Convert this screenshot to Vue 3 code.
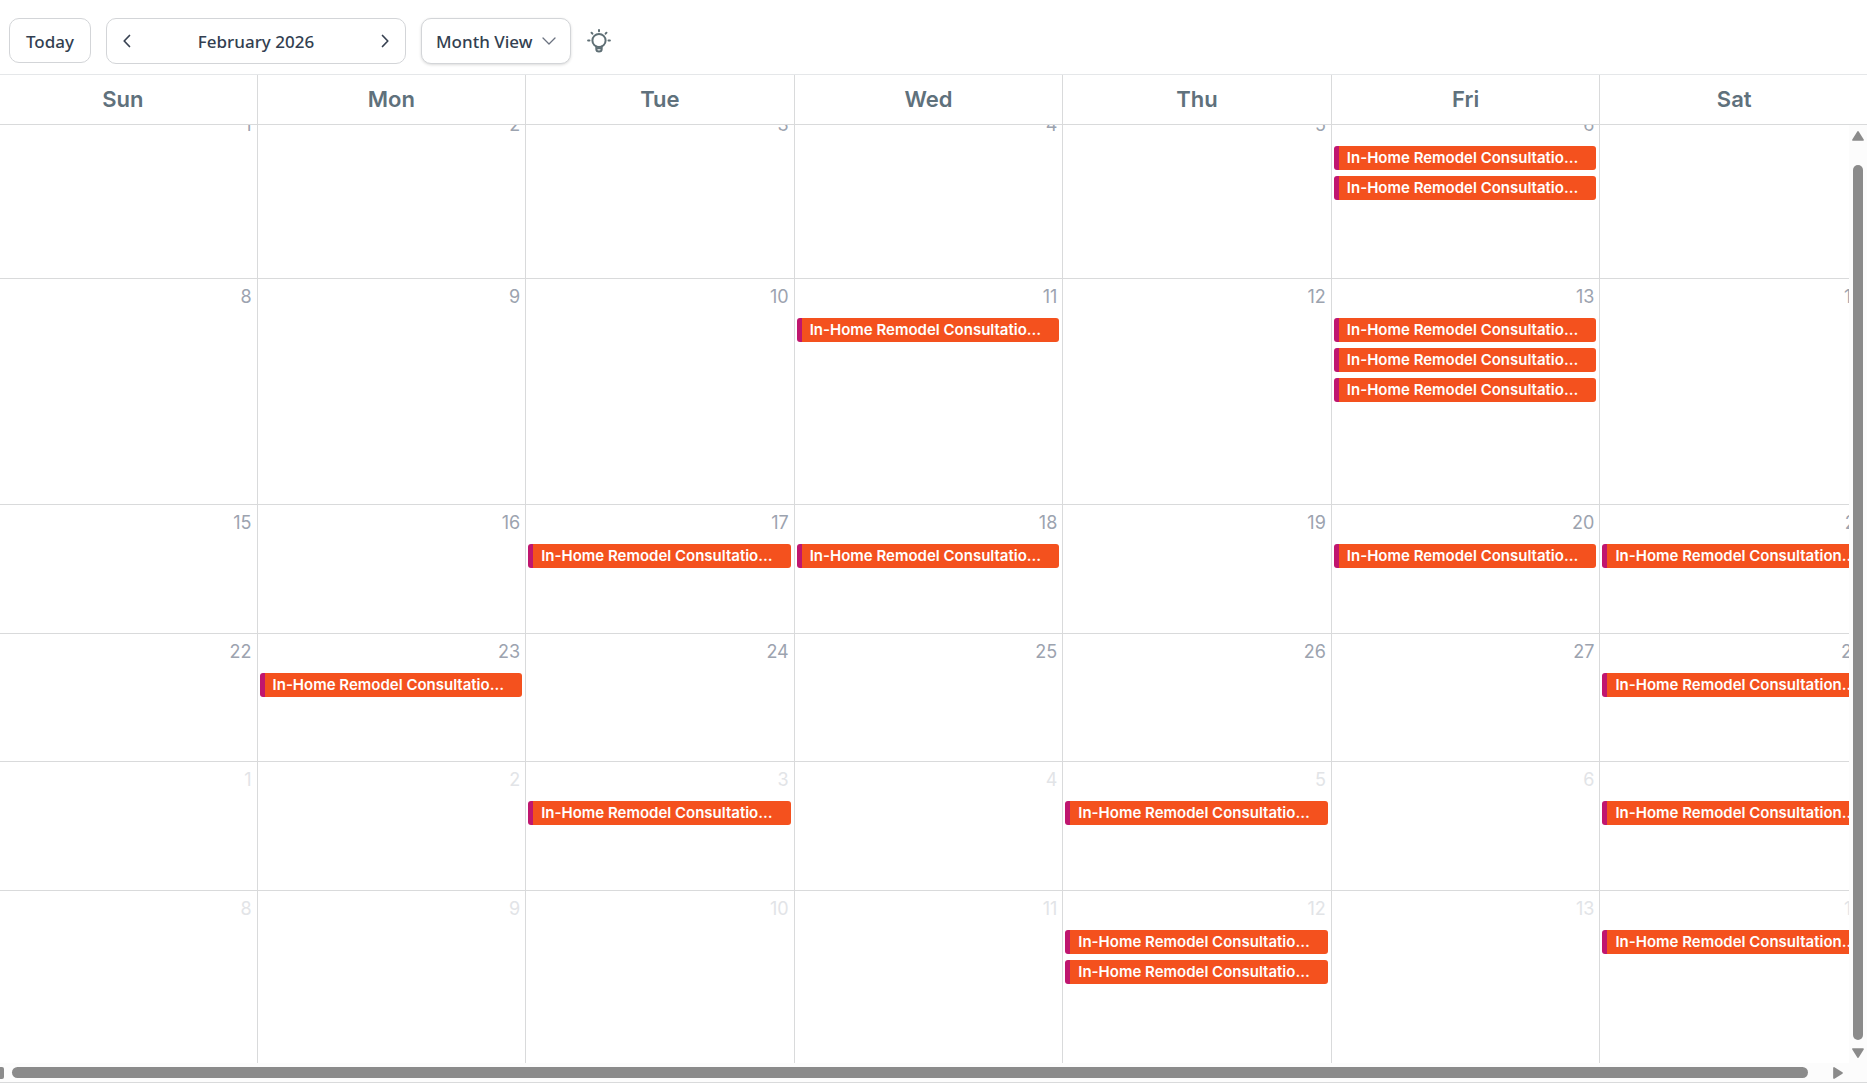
<script setup>
import { ref } from 'vue'

const view = ref('Month View')
const dayNames = ['Sun', 'Mon', 'Tue', 'Wed', 'Thu', 'Fri', 'Sat']
const title = 'In-Home Remodel Consultation Visit'

// Each week: first date, whether it belongs to the next month, and event counts per weekday
const weekData = [
  { start: 1, size: 'first', counts: [0, 0, 0, 0, 0, 2, 0] },
  { start: 8, size: 'tall', counts: [0, 0, 0, 1, 0, 3, 0] },
  { start: 15, size: 'short', counts: [0, 0, 1, 1, 0, 1, 1] },
  { start: 22, size: 'shorter', counts: [0, 1, 0, 0, 0, 0, 1] },
  { start: 1, size: 'short', next: true, counts: [0, 0, 1, 0, 1, 0, 1] },
  { start: 8, size: 'last', next: true, counts: [0, 0, 0, 0, 2, 0, 1] },
]
const weeks = weekData.map((w) => ({
  ...w,
  days: w.counts.map((count, i) => ({ date: w.start + i, count })),
}))
</script>

<template>
  <main class="calendar">
    <header class="toolbar">
      <button class="control today" type="button">Today</button>
      <div class="control period">
        <button class="arrow" type="button" aria-label="Previous month">
          <svg width="8" height="14" viewBox="0 0 8 14"><path d="M6.500 1.500 1.200 7l5.300 5.500" /></svg>
        </button>
        <span>February 2026</span>
        <button class="arrow" type="button" aria-label="Next month">
          <svg width="8" height="14" viewBox="0 0 8 14"><path d="M1.500 1.500 6.800 7l-5.300 5.500" /></svg>
        </button>
      </div>
      <div class="view">
        <select v-model="view" class="control" aria-label="Calendar view">
          <option>Month View</option>
          <option>Week View</option>
          <option>Day View</option>
        </select>
        <svg class="caret" width="14" height="8" viewBox="0 0 14 8"><path d="M1 1l6 6 6-6" /></svg>
      </div>
      <button class="hint" type="button" aria-label="Tips">
        <svg width="24" height="24" viewBox="0 0 24 24">
          <circle cx="12" cy="11.500" r="6.600" />
          <path d="M9.300 17.500v2.600c0 1.500 1.100 2.500 2.700 2.500s2.700-1 2.700-2.500v-2.600M9.500 19.300h5" />
          <path d="M12 1v1.300M4.500 3.700l.9 1M19.500 3.700l-.9 1M1.100 11.500h1.400M21.500 11.500h1.400" />
        </svg>
      </button>
    </header>

    <section class="board">
      <table class="month">
        <thead>
          <tr class="track">
            <th v-for="name in dayNames" :key="name" scope="col">{{ name }}</th>
          </tr>
        </thead>
        <tbody>
          <tr v-for="(week, w) in weeks" :key="w" class="track week" :class="[week.size, { next: week.next }]">
            <td v-for="day in week.days" :key="day.date">
              <span class="date">{{ day.date }}</span>
              <a v-for="n in day.count" :key="n" class="event" href="#">
                <span class="label">{{ title }}</span>
              </a>
            </td>
          </tr>
        </tbody>
      </table>
      <div class="vbar" aria-hidden="true">
        <svg width="12" height="10" viewBox="0 0 12 10"><path d="M6 1 11 9H1z" /></svg>
        <div class="thumb"></div>
        <svg width="12" height="10" viewBox="0 0 12 10"><path d="M1 1h10L6 9z" /></svg>
      </div>
    </section>

    <div class="hbar" aria-hidden="true">
      <div class="stub"></div>
      <div class="thumb"></div>
      <svg width="10" height="12" viewBox="0 0 10 12"><path d="M1 1v10l8-5z" /></svg>
    </div>
  </main>
</template>

<style>
body {
  margin: 0;
  background: #fff;
}
</style>

<style scoped>
* {
  box-sizing: border-box;
}
.calendar {
  display: flex;
  flex-direction: column;
  height: 100vh;
  padding-bottom: 4px;
  overflow: hidden;
  font-family: Inter, sans-serif;
}
button {
  margin: 0;
  padding: 0;
  border: 0;
  background: none;
  cursor: pointer;
}
svg {
  display: block;
  fill: none;
  stroke: #374151;
  stroke-width: 1.7;
  stroke-linecap: round;
  stroke-linejoin: round;
}
.toolbar {
  display: flex;
  align-items: flex-start;
  height: 74px;
  padding: 18px 9px 0;
}
.control {
  height: 46px;
  padding-top: 2px;
  border: 1px solid #d3d5d8;
  border-radius: 10px;
  background: #fff;
  color: #333f51;
  font: 500 17px/24px "Noto Sans", sans-serif;
}
.today {
  width: 82px;
  height: 45px;
  margin-right: 15px;
}
.period {
  display: flex;
  align-items: center;
  justify-content: space-between;
  width: 300px;
  margin-right: 15px;
  padding: 1px 8px 0;
}
.arrow {
  display: grid;
  place-items: center;
  width: 24px;
  height: 32px;
  padding-bottom: 2px;
}
.view {
  position: relative;
  margin-right: 16px;
}
.view select {
  width: 150px;
  padding: 2px 14px 0;
  appearance: none;
  box-shadow: 0 1px 3px rgba(0, 0, 0, 0.15);
}
.caret {
  position: absolute;
  top: 19px;
  right: 15px;
  pointer-events: none;
  stroke: #6b7280;
  stroke-width: 1.3;
}
.hint {
  padding-top: 11px;
}
.hint svg {
  stroke: #5f6f75;
  stroke-width: 2;
}
.board {
  position: relative;
  display: flex;
  flex: 1;
  min-height: 0;
  overflow: hidden;
}
.month {
  display: flex;
  flex: 1;
  flex-direction: column;
  min-width: 0;
}
thead {
  display: block;
  border-top: 1px solid #e5e7e9;
  border-bottom: 1px solid #d9dadb;
}
.track {
  display: grid;
  grid-template-columns: repeat(7, minmax(0, 1fr));
  width: calc(100% + 13px);
  margin-left: -11px;
}
th {
  height: 49px;
  padding: 0;
  border-right: 1px solid #d9dadb;
  color: #5f717c;
  font-size: 22px;
  font-weight: 600;
  line-height: 49px;
}
tbody {
  display: flex;
  flex: 1;
  flex-direction: column;
  min-height: 0;
  overflow: hidden;
}
.week {
  flex: none;
  border-top: 1px solid #d9dadb;
}
.first {
  height: 172px;
  margin-top: -19px;
}
.tall {
  height: 226px;
}
.short {
  height: 129px;
}
.shorter {
  height: 128px;
}
.last {
  flex: 1;
}
td {
  display: flex;
  flex-direction: column;
  gap: 6px;
  min-width: 0;
  padding: 6px 3px 0 2px;
  border-right: 1px solid #d9dadb;
}
.date {
  margin-bottom: 3px;
  padding-right: 2px;
  color: #9ca3af;
  font-size: 18px;
  line-height: 24px;
  text-align: right;
}
.next .date {
  color: #e2e4e7;
}
.event {
  display: flex;
  flex: none;
  height: 24px;
  padding: 0 18px 0 8px;
  border-left: 5px solid #c0166f;
  border-radius: 3px;
  background: #f4511e;
  color: #fff;
  font-size: 15px;
  font-weight: 600;
  line-height: 24px;
  text-decoration: none;
}
.label {
  overflow: hidden;
  text-overflow: ellipsis;
  white-space: nowrap;
}
td:last-child .event {
  padding-right: 8px;
}
.vbar {
  position: absolute;
  top: 51px;
  right: 0;
  bottom: 0;
  display: flex;
  flex-direction: column;
  align-items: center;
  width: 18px;
  padding: 6px 0 5px;
  background: #fcfcfc;
}
.vbar svg,
.hbar svg {
  fill: #8b8b8b;
  stroke: #8b8b8b;
}
.vbar .thumb {
  flex: 1;
  width: 10px;
  margin: 24px 0 8px;
  border-radius: 5px;
  background: #8b8b8b;
}
.hbar {
  display: flex;
  align-items: center;
  height: 20px;
  padding: 0 24px 0 0;
  border-bottom: 1px solid #d9dadb;
  background: #fcfcfc;
}
.stub {
  width: 4px;
  height: 12px;
  border-radius: 0 2px 2px 0;
  background: #8b8b8b;
}
.hbar .thumb {
  flex: 1;
  height: 11px;
  margin: 0 25px 0 8px;
  border-radius: 6px;
  background: #8b8b8b;
}
</style>
